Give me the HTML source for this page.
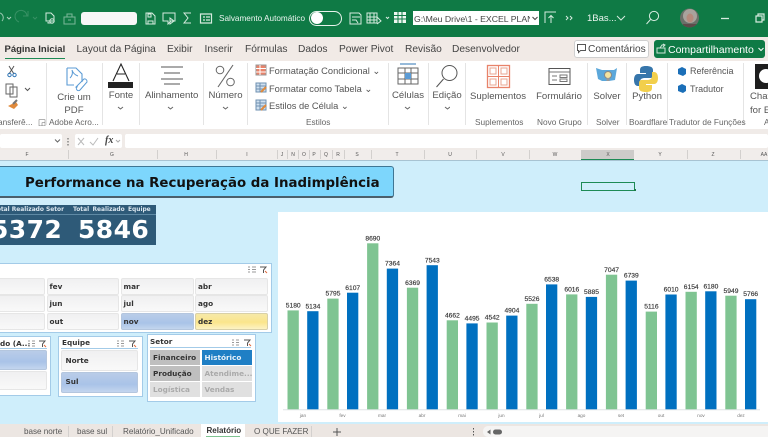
<!DOCTYPE html>
<html lang="pt"><head><meta charset="utf-8"><title>Excel</title>
<style>
html,body{margin:0;padding:0;background:#cfeefb}
#r{position:relative;width:768px;height:437px;overflow:hidden;font-family:"Liberation Sans",sans-serif;filter:blur(.3px);background:#cfeefb}
#r div,#r svg{position:absolute}
.t{white-space:nowrap;line-height:12px;color:#444}
.w{color:#fff}
.m{font-size:10.2px;top:44px;color:#444}
.rb{font-size:9.6px;color:#555;text-align:center}
.g{font-size:8.3px;color:#666;top:116px}
.sep{top:63px;height:62px;width:1px;background:#e4e4e4}
.c{top:152px;font-size:5px;color:#555;line-height:7px;text-align:center}
.cs{top:150px;width:1px;height:9px;background:#d3d0ce}
.b{font-family:"DejaVu Sans",sans-serif;font-weight:bold;font-size:7.3px;color:#333;line-height:16px;box-sizing:border-box;padding-left:2px;border:1px solid #e6e6e6;border-radius:2px;background:linear-gradient(#f0f0f1,#f9f9f9);white-space:nowrap;overflow:hidden}
.bl{background:linear-gradient(#b9cce8,#a9c3e8 60%,#c3d5ee);border-color:#b4c6de}
.s{font-family:"DejaVu Sans",sans-serif;font-weight:bold;font-size:7.3px;line-height:15px;padding-left:3px;box-sizing:border-box;white-space:nowrap;overflow:hidden}
.h{font-family:"DejaVu Sans",sans-serif;font-weight:bold;font-size:7.3px;color:#333;line-height:10px;white-space:nowrap}
.sl{background:#fff;border:1px solid #a3cbe8;box-sizing:border-box}
.tab{top:426px;font-size:8.100px;color:#555}
svg text{font-family:"Liberation Sans",sans-serif}
</style></head><body>
<div id="r">
<!-- title bar -->
<div style="left:0;top:0;width:768px;height:37px;background:#0f7a45"></div>
<svg style="left:0;top:0" width="768" height="37" fill="none" stroke="#d6ebdf" stroke-width="1">
<path d="M0 13a5 5 0 0 1 2 8" opacity=".7"/>
<path d="M7 17l2 2 2-2" opacity=".8"/>
<path d="M19 22a6 6 0 1 1 8 -6M28 11v5h-5" opacity=".2"/>
<path d="M33 17l2 2 2-2" opacity=".2"/>
<path d="M46 13h5l3 3v5h-8zM48 22v1h5" /><circle cx="52" cy="21" r="2.2"/>
<path d="M64 17h11v7h-11zM67 17v-3h5v3M68 20h3" opacity=".55"/>
<path d="M146 13h6l3 3v8h-9zM148 21h5v3h-5zM148 14h3v3h-3z"/>
<path d="M163 13h12v8h-4l-3 3v-3h-5zM170 18l4 3-4 3z"/>
<path d="M191 13h-7l4 5-4 5h7" />
<path d="M200.500 14h11v9h-11zM203 17h2M203 20h2M206 17h4M206 20h4" stroke-width="1.2"/>
<path d="M350 13h9l2 2v9h-11zM352 17h8M352 20h4l2 3" />
<path d="M367 13h10v10h-10zM370 13v10M374 13v10M367 17h10M367 20h10M377 17l4 4-4 3"/>
<path d="M386 17l1.500 1.500 1.500-1.500"/>
<path d="M545 23v-11h10M547 12h9M551 23v-7M548.500 18l2.500-2.500 2.500 2.500"/>
<path d="M566 16l2 2-2 2M570 16l2 2-2 2"/>
<path d="M617 16l4 4 4-4"/>
<circle cx="654" cy="16" r="4.600"/><path d="M650.500 19.500l-4 4.500"/>
<path d="M721 18.500h8" stroke-width="1.3"/>
<path d="M756 16h6v6h-6zM758 16v-2h6v6h-2" stroke-width="1.2"/>
</svg>
<div style="left:81px;top:11.500px;width:56px;height:13.500px;background:#f7f7f7;border-radius:3px"></div>
<div class="t w" style="left:219px;top:13px;font-size:8.200px;opacity:.92">Salvamento Automático</div>
<div style="left:309px;top:10.500px;width:33px;height:15px;box-sizing:border-box;border:1px solid #e8f2ec;border-radius:8px"></div>
<div style="left:311px;top:12px;width:12px;height:12px;background:#fff;border-radius:50%"></div>
<svg style="left:394px;top:12px" width="13" height="13"><rect x="0" y="0" width="12" height="11" fill="#eef6f1"/><path d="M0 3.500h12M0 7h12M4 0v11M8 0v11" stroke="#0f7a45"/></svg>
<div style="left:412.500px;top:11px;width:126px;height:14px;background:#fff"></div>
<div class="t" style="left:414px;top:13px;font-size:8.700px;color:#444;width:116px;overflow:hidden">G:\Meu Drive\1 - EXCEL PLANILH</div>
<svg style="left:532px;top:16px" width="6" height="5"><path d="M.5 1l2.500 2.500L5.500 1" fill="none" stroke="#444"/></svg>
<div class="t w" style="left:587px;top:13px;font-size:9.500px;opacity:.92">1Bas...</div>
<svg style="left:680px;top:8px" width="20" height="20"><defs><clipPath id="av"><circle cx="9.500" cy="10" r="9.500"/></clipPath></defs><g clip-path="url(#av)"><rect width="20" height="20" fill="#6b7069"/><circle cx="10" cy="8" r="7" fill="#a8a29c"/><ellipse cx="10" cy="10" rx="3.500" ry="4.500" fill="#b58a7c"/><rect x="3" y="16" width="14" height="4" fill="#5e4a4a"/></g></svg>

<!-- tabs -->
<div style="left:0;top:37px;width:768px;height:24px;background:#f1eae6"></div>
<div class="t m" style="left:4.500px;font-weight:bold;font-size:9.500px;color:#333">Página Inicial</div>
<div style="left:5px;top:57.500px;width:60px;height:1.500px;background:#1d8a55"></div>
<div class="t m" style="left:76.500px">Layout da Página</div>
<div class="t m" style="left:167px">Exibir</div>
<div class="t m" style="left:204.500px">Inserir</div>
<div class="t m" style="left:245px">Fórmulas</div>
<div class="t m" style="left:298px">Dados</div>
<div class="t m" style="left:339px">Power Pivot</div>
<div class="t m" style="left:405px">Revisão</div>
<div class="t m" style="left:452px">Desenvolvedor</div>
<div style="left:574px;top:39.500px;width:75px;height:18px;box-sizing:border-box;background:#fff;border:1px solid #cfcfcf;border-radius:3px"></div>
<svg style="left:577px;top:44px" width="10" height="10"><path d="M.5.500h8v6h-5l-2 2v-2h-1z" fill="none" stroke="#555"/></svg>
<div class="t" style="left:588px;top:43.500px;font-size:10.200px;color:#444">Comentários</div>
<div style="left:654px;top:39.500px;width:111px;height:18px;background:#0f7a45;border-radius:3px"></div>
<svg style="left:656px;top:43px" width="11" height="11"><path d="M1 5h8v5h-8zM4 5l2-3h3M7 1l2 1-2 2" fill="none" stroke="#cfe6d9"/></svg>
<div class="t w" style="left:668px;top:43.500px;font-size:10.500px">Compartilhamento</div>
<svg style="left:758px;top:47px" width="6" height="5"><path d="M.5 1l2.500 2.500L5.500 1" fill="none" stroke="#fff"/></svg>

<!-- ribbon -->
<div style="left:0;top:61px;width:768px;height:68px;background:#fff"></div>
<div class="sep" style="left:46px"></div><div class="sep" style="left:102px"></div><div class="sep" style="left:139px"></div><div class="sep" style="left:203px"></div><div class="sep" style="left:247px"></div><div class="sep" style="left:388px"></div><div class="sep" style="left:428px"></div><div class="sep" style="left:465px"></div><div class="sep" style="left:587px"></div><div class="sep" style="left:626px"></div><div class="sep" style="left:667px"></div><div class="sep" style="left:743px"></div>
<svg style="left:0;top:60px" width="768" height="70" fill="none">
<path d="M9 6l5 8M14 6l-5 8" stroke="#555"/><circle cx="9.500" cy="15" r="1.700" stroke="#2e75b6"/><circle cx="14.500" cy="15" r="1.700" stroke="#2e75b6"/>
<path d="M6 24h7v10h-7zM10 27h7v10h-7z" stroke="#666" fill="#fff"/>
<path d="M25 28l2.500 2.500L30 28" stroke="#555"/>
<path d="M8 46l6 3 4-4-2-3z" fill="#e08a3c"/><path d="M13 44l4-4" stroke="#777" stroke-width="2"/>
<path d="M67 8h9l6 6v8M67 8v17h7" stroke="#5b9bd5" stroke-width="1.100"/><path d="M70 18c2-2 3-5 2-8 1 3 3 5 6 6" stroke="#5b9bd5"/><path d="M76 27l8-8a2.500 2.500 0 0 1 3 3l-7 8a2 2 0 0 1-3-3z" stroke="#5b9bd5"/>
<path d="M113 21l8-17 8 17M117 14h8" stroke="#222" stroke-width="1.100"/>
<rect x="108" y="22" width="25" height="6" fill="#222"/>
<path d="M161 7h22M164 13h16M161 19h22M164 24h16" stroke="#777" stroke-width="1.200"/>
<circle cx="220" cy="10" r="3.800" stroke="#666"/><circle cx="230.500" cy="22" r="3.800" stroke="#666"/><path d="M233 5l-15 22" stroke="#666" stroke-width="1.100"/>
<rect x="256" y="5" width="10" height="10" fill="#e8836a" stroke="#999"/><path d="M256 8.500h10M256 12h10M260 5v10" stroke="#fff"/>
<rect x="256" y="23" width="10" height="9" fill="#cfe0ef" stroke="#6f90b0"/><path d="M256 26h10M256 29h10M260 23v9" stroke="#6f90b0"/><path d="M261 32l5-5" stroke="#e08a3c" stroke-width="2"/>
<rect x="256" y="40" width="10" height="10" fill="#cfe0ef" stroke="#6f90b0"/><path d="M256 43h10M256 46h10M260 40v10" stroke="#6f90b0"/><path d="M261 50l5-5" stroke="#e08a3c" stroke-width="2"/>
<path d="M398 8h20v16h-20zM398 13h20M398 19h20M405 8v16M411 8v16" stroke="#666"/><rect x="405" y="13" width="6" height="6" fill="#5b9bd5"/><path d="M400 4h16" stroke="#2e75b6"/>
<circle cx="449.500" cy="13" r="7.500" stroke="#555"/><path d="M443.500 19l-7 8" stroke="#555"/>
<rect x="487.500" y="5.500" width="22" height="22" stroke="#e8836a" stroke-width="1.300"/><path d="M498.500 5.500v22M487.500 16.500h22" stroke="#e8836a"/><rect x="490" y="8" width="6" height="6" stroke="#e8a590"/><rect x="501" y="8" width="6" height="6" stroke="#e8a590"/><rect x="490" y="19" width="6" height="6" stroke="#e8a590"/><rect x="501" y="19" width="6" height="6" stroke="#e8a590"/>
<rect x="549" y="8.500" width="21" height="16" stroke="#555"/><path d="M549 12h21M552 16h5M552 20h5" stroke="#777"/><rect x="560" y="15" width="7" height="2.500" stroke="#777"/><rect x="560" y="19" width="7" height="2.500" stroke="#777"/>
<path d="M596 8l6 2h12l3-2-2 12-6 1h-7l-4-2z" fill="#5ba7da"/><circle cx="608" cy="15" r="3.500" fill="#f3e3a0" stroke="#888"/><rect x="606.500" y="18" width="3" height="3" fill="#999"/>
<path d="M646 6c-4 0-6 1-6 4v3h6v1h-8c-3 0-4 3-4 6s1 6 4 6h2v-4c0-3 2-4 5-4h5c2 0 3-1 3-3v-5c0-3-3-4-7-4z" fill="#3776ab"/><path d="M646 32c4 0 6-1 6-4v-3h-6v-1h8c3 0 4-3 4-6s-1-6-4-6h-2v4c0 3-2 4-5 4h-5c-2 0-3 1-3 3v5c0 3 3 4 7 4z" fill="#f2cf4c"/>
<path d="M678 9l4-2 4 2v5l-3 2-5-2z" fill="#1b6fb8"/><path d="M678 26l4-2 4 2v5l-3 2-5-2z" fill="#1b6fb8"/>
</svg>
<div style="left:755px;top:64px;width:13px;height:25px;background:#1e1e1e"></div>
<div style="left:759px;top:69px;width:14px;height:14px;background:#fff;border-radius:50%"></div>
<div class="t rb" style="left:54px;top:90.500px;width:40px;line-height:13.500px;white-space:normal">Crie um PDF</div>
<div class="t g" style="left:49px">Adobe Acro...</div>
<div class="t g" style="left:-2px">ansferê...</div>
<div class="t g" style="left:38px;color:#666">◲</div>
<div class="t rb" style="left:100px;top:90px;width:42px">Fonte</div>
<div class="t rb" style="left:145px;top:90px;width:53px">Alinhamento</div>
<div class="t rb" style="left:205px;top:90px;width:41px">Número</div>
<div class="t" style="left:269px;top:65px;font-size:9.300px;color:#555">Formatação Condicional ⌄</div>
<div class="t" style="left:269px;top:83px;font-size:9.300px;color:#555">Formatar como Tabela ⌄</div>
<div class="t" style="left:269px;top:100px;font-size:9.300px;color:#555">Estilos de Célula ⌄</div>
<div class="t g" style="left:306px">Estilos</div>
<div class="t rb" style="left:390px;top:90px;width:36px">Células</div>
<div class="t rb" style="left:431px;top:90px;width:32px">Edição</div>
<div class="t rb" style="left:470px;top:91px;width:56px">Suplementos</div>
<div class="t rb" style="left:532px;top:91px;width:54px">Formulário</div>
<div class="t rb" style="left:590px;top:91px;width:34px">Solver</div>
<div class="t rb" style="left:629px;top:91px;width:36px">Python</div>
<div class="t" style="left:690px;top:65px;font-size:9px;color:#555">Referência</div>
<div class="t" style="left:690px;top:83px;font-size:9px;color:#555">Tradutor</div>
<div class="t rb" style="left:750px;top:90px;width:30px;text-align:left;line-height:13.500px;white-space:normal">Chat for E</div>
<div class="t g" style="left:475px">Suplementos</div>
<div class="t g" style="left:537px">Novo Grupo</div>
<div class="t g" style="left:596px">Solver</div>
<div class="t g" style="left:629px">Boardflare</div>
<div class="t g" style="left:669px">Tradutor de Funções</div>
<div class="t g" style="left:764px">A</div>
<svg style="left:0;top:100px" width="450" height="12" fill="none" stroke="#666"><path d="M118 7l2.500 2 2.500-2M168 7l2.500 2 2.500-2M223 7l2.500 2 2.500-2M405 7l2.500 2 2.500-2M445 7l2.500 2 2.500-2"/></svg>

<!-- formula bar -->
<div style="left:0;top:129px;width:768px;height:21px;background:#f0ebe8"></div>
<div style="left:0;top:134px;width:62px;height:14px;background:#fff;border-radius:2px"></div>
<div style="left:74.500px;top:134px;width:47px;height:14px;background:#fff;border-radius:2px"></div>
<div style="left:125px;top:134px;width:643px;height:14px;background:#fff;border-radius:2px"></div>
<svg style="left:0;top:134px" width="125" height="14" fill="none"><path d="M55 5.500l2.500 2.500 2.500-2.500" stroke="#666"/><path d="M68 4v1.500M68 7v1.500M68 10v1.500" stroke="#555"/><path d="M78 4l6 7M84 4l-6 7M90 8l3 3 5-7" stroke="#bbb"/><path d="M116 6l2 2 2-2" stroke="#aaa"/></svg>
<div class="t" style="left:105px;top:135px;font:italic bold 10px 'Liberation Serif',serif;line-height:12px;color:#444">fx</div>

<!-- column headers -->
<div style="left:0;top:150px;width:768px;height:9.500px;background:#f1edeb;border-bottom:1px solid #a8c3d2;box-sizing:content-box"></div>
<div style="left:581px;top:150px;width:53px;height:9px;background:#cdcbc9;border-bottom:1px solid #1d8a55"></div>
<div class="t c" style="left:17px;width:20px">F</div><div class="t c" style="left:102px;width:20px">G</div><div class="t c" style="left:176px;width:20px">H</div><div class="t c" style="left:237px;width:20px">I</div><div class="t c" style="left:277px;width:10px">J</div><div class="t c" style="left:288px;width:10px">N</div><div class="t c" style="left:299px;width:10px">O</div><div class="t c" style="left:309px;width:10px">P</div><div class="t c" style="left:321px;width:10px">Q</div><div class="t c" style="left:333px;width:10px">R</div><div class="t c" style="left:347px;width:20px">S</div><div class="t c" style="left:387px;width:20px">T</div><div class="t c" style="left:440px;width:20px">U</div><div class="t c" style="left:493px;width:20px">V</div><div class="t c" style="left:545px;width:20px">W</div><div class="t c" style="left:598px;width:20px">X</div><div class="t c" style="left:650px;width:20px">Y</div><div class="t c" style="left:703px;width:20px">Z</div><div class="t c" style="left:754px;width:20px">AA</div>
<div class="cs" style="left:68px"></div><div class="cs" style="left:157px"></div><div class="cs" style="left:216px"></div><div class="cs" style="left:277px"></div><div class="cs" style="left:287px"></div><div class="cs" style="left:298px"></div><div class="cs" style="left:309px"></div><div class="cs" style="left:320px"></div><div class="cs" style="left:332px"></div><div class="cs" style="left:344px"></div><div class="cs" style="left:371px"></div><div class="cs" style="left:424px"></div><div class="cs" style="left:476px"></div><div class="cs" style="left:529px"></div><div class="cs" style="left:687px"></div><div class="cs" style="left:740px"></div>

<!-- selected cell -->
<div style="left:581px;top:181.500px;width:54px;height:9.500px;box-sizing:border-box;border:1px solid #1d8a55"></div>
<div style="left:633.500px;top:188.500px;width:2.500px;height:2.500px;background:#1d7a45"></div>

<!-- title banner -->
<div style="left:-6px;top:165.500px;width:400px;height:32.500px;box-sizing:border-box;background:#7dd6fc;border:1.500px solid #3f7694;border-bottom:2px solid #4a5f6c;border-radius:3px"></div>
<div class="t" style="left:25px;top:176px;font:bold 13.350px 'DejaVu Sans',sans-serif;line-height:16px;color:#111">Performance na Recuperação da Inadimplência</div>

<!-- KPI -->
<div style="left:0;top:205px;width:156px;height:39.500px;background:#2e5a78"></div>
<div style="left:0;top:213.500px;width:156px;height:1px;background:#5f8aa5"></div>
<div class="t" style="right:704px;top:205.500px;font:bold 5.900px 'DejaVu Sans',sans-serif;line-height:9px;color:#dbe6ee">Total Realizado Setor</div>
<div class="t" style="left:73px;top:205.500px;font:bold 5.900px 'DejaVu Sans',sans-serif;line-height:9px;color:#dbe6ee;word-spacing:1.300px">Total Realizado Equipe</div>
<div class="t" style="left:-9px;top:215px;font:bold 25px 'DejaVu Sans',sans-serif;line-height:29px;color:#fff;letter-spacing:.4px">5372</div>
<div class="t" style="left:78px;top:215px;font:bold 25px 'DejaVu Sans',sans-serif;line-height:29px;color:#fff;letter-spacing:.4px">5846</div>

<!-- month slicer -->
<div class="sl" style="left:-4px;top:263px;width:276px;height:70px"></div>
<div class="b" style="left:-4px;top:277.500px;width:49px;height:17px"></div>
<div class="b" style="left:46.500px;top:277.500px;width:72.500px;height:17px">fev</div>
<div class="b" style="left:120.500px;top:277.500px;width:73px;height:17px">mar</div>
<div class="b" style="left:195px;top:277.500px;width:73px;height:17px">abr</div>
<div class="b" style="left:-4px;top:295px;width:49px;height:17px"></div>
<div class="b" style="left:46.500px;top:295px;width:72.500px;height:17px">jun</div>
<div class="b" style="left:120.500px;top:295px;width:73px;height:17px">jul</div>
<div class="b" style="left:195px;top:295px;width:73px;height:17px">ago</div>
<div class="b" style="left:-4px;top:312.500px;width:49px;height:17px"></div>
<div class="b" style="left:46.500px;top:312.500px;width:72.500px;height:17px">out</div>
<div class="b bl" style="left:120.500px;top:312.500px;width:73px;height:17px">nov</div>
<div class="b" style="left:195px;top:312.500px;width:73px;height:17px;background:linear-gradient(#f6e9a8,#fbe58c 55%,#fdf3c4);border-color:#d8d0a8">dez</div>

<!-- slicer 2 -->
<div class="sl" style="left:-4px;top:335.500px;width:55px;height:60.500px"></div>
<div class="h" style="left:0;top:339px">do (A...</div>
<div style="left:0;top:348px;width:47px;height:1px;background:#a3cbe8"></div>
<div class="b bl" style="left:-4px;top:350px;width:51px;height:19.500px"></div>
<div class="b" style="left:-4px;top:371px;width:51px;height:19px"></div>

<!-- Equipe -->
<div class="sl" style="left:58px;top:335.500px;width:84.500px;height:61.500px"></div>
<div class="h" style="left:62px;top:337.500px">Equipe</div>
<div style="left:61px;top:348px;width:77px;height:1px;background:#a3cbe8"></div>
<div class="b" style="left:61px;top:350px;width:77px;height:21px;line-height:19px;padding-left:3.500px">Norte</div>
<div class="b bl" style="left:61px;top:372px;width:77px;height:20.500px;line-height:18px;padding-left:3.500px">Sul</div>

<!-- Setor -->
<div class="sl" style="left:146.500px;top:334px;width:109px;height:68px"></div>
<div class="h" style="left:150px;top:336.500px">Setor</div>
<div style="left:150px;top:347px;width:101px;height:1px;background:#a3cbe8"></div>
<div class="s" style="left:150px;top:349.500px;width:50px;height:15px;background:#bfbfbf;color:#333">Financeiro</div>
<div class="s" style="left:201.500px;top:349.500px;width:50px;height:15px;background:#1f7fc5;color:#e8f2fa">Histórico</div>
<div class="s" style="left:150px;top:366px;width:50px;height:15px;background:#bfbfbf;color:#333">Produção</div>
<div class="s" style="left:201.500px;top:366px;width:50px;height:15px;background:#e0e0e0;color:#aaa">Atendime...</div>
<div class="s" style="left:150px;top:382px;width:50px;height:14.500px;background:#e0e0e0;color:#aaa">Logística</div>
<div class="s" style="left:201.500px;top:382px;width:50px;height:14.500px;background:#e0e0e0;color:#aaa">Vendas</div>

<svg style="left:0;top:260px" width="280" height="100" fill="none">
<g stroke="#999"><path d="M248 7h2M248 9.500h2M248 12h2M252 7h4M252 9.500h4M252 12h4"/><path d="M117 81h2M117 83.500h2M117 86h2M121 81h3M121 83.500h3M121 86h3"/><path d="M28 81h2M28 83.500h2M28 86h2M32 81h3M32 83.500h3M32 86h3"/><path d="M232 80h2M232 82.500h2M232 85h2M236 80h3M236 82.500h3M236 85h3"/></g>
<g stroke="#555"><path d="M260 7h6l-2.500 3v3M129 81h6l-2.500 3v3M39 81h6l-2.500 3v3M244 80h6l-2.500 3v3"/></g>
<g stroke="#e06a3c"><path d="M265 11l2 2M134 85l2 2M44 85l2 2M249 84l2 2"/></g>
</svg>

<!-- chart -->
<div style="left:278px;top:212px;width:490px;height:210px;background:#fff"></div>
<svg style="left:0;top:0" width="768" height="437">
<path d="M283 409.800H760" stroke="#dfe3e6" stroke-width="1"/>
<g fill="#7fc492">
<rect x="287.500" y="310.400" width="11.300" height="98.900"/><rect x="327.300" y="298.600" width="11.300" height="110.700"/><rect x="367.100" y="243.300" width="11.300" height="166"/><rect x="406.900" y="287.700" width="11.300" height="121.600"/><rect x="446.700" y="320.300" width="11.300" height="89"/><rect x="486.500" y="322.500" width="11.300" height="86.800"/><rect x="526.300" y="303.800" width="11.300" height="105.500"/><rect x="566.100" y="294.400" width="11.300" height="114.900"/><rect x="605.900" y="274.700" width="11.300" height="134.600"/><rect x="645.700" y="311.600" width="11.300" height="97.700"/><rect x="685.500" y="291.800" width="11.300" height="117.500"/><rect x="725.300" y="295.700" width="11.300" height="113.600"/>
</g>
<g fill="#0070c0">
<rect x="307.200" y="311.200" width="11.300" height="98.100"/><rect x="347" y="292.700" width="11.300" height="116.600"/><rect x="386.800" y="268.600" width="11.300" height="140.700"/><rect x="426.600" y="265.200" width="11.300" height="144.100"/><rect x="466.400" y="323.400" width="11.300" height="85.900"/><rect x="506.200" y="315.600" width="11.300" height="93.700"/><rect x="546" y="284.400" width="11.300" height="124.900"/><rect x="585.800" y="296.900" width="11.300" height="112.400"/><rect x="625.600" y="280.600" width="11.300" height="128.700"/><rect x="665.400" y="294.500" width="11.300" height="114.800"/><rect x="705.200" y="291.300" width="11.300" height="118"/><rect x="745" y="299.200" width="11.300" height="110.100"/>
</g>
<g font-size="6.700" fill="#333" text-anchor="middle" stroke="#333" stroke-width=".15">
<text x="293.200" y="307.500">5180</text><text x="312.900" y="308.300">5134</text><text x="333" y="295.700">5795</text><text x="352.700" y="289.800">6107</text><text x="372.800" y="240.400">8690</text><text x="392.500" y="265.700">7364</text><text x="412.600" y="284.800">6369</text><text x="432.300" y="262.300">7543</text><text x="452.400" y="317.400">4662</text><text x="472.100" y="320.500">4495</text><text x="492.200" y="319.600">4542</text><text x="511.900" y="312.700">4904</text><text x="532" y="300.900">5526</text><text x="551.700" y="281.500">6538</text><text x="571.800" y="291.500">6016</text><text x="591.500" y="294">5885</text><text x="611.600" y="271.800">7047</text><text x="631.300" y="277.700">6739</text><text x="651.400" y="308.700">5116</text><text x="671.100" y="291.600">6010</text><text x="691.200" y="288.900">6154</text><text x="710.900" y="288.400">6180</text><text x="731" y="292.800">5949</text><text x="750.700" y="296.200">5766</text>
</g>
<g font-size="4.700" fill="#777" text-anchor="middle">
<text x="303" y="417">jan</text><text x="342.500" y="417">fev</text><text x="382" y="417">mar</text><text x="422" y="417">abr</text><text x="462" y="417">mai</text><text x="501.500" y="417">jun</text><text x="541.500" y="417">jul</text><text x="581.500" y="417">ago</text><text x="621" y="417">set</text><text x="661" y="417">out</text><text x="701" y="417">nov</text><text x="741" y="417">dez</text>
</g>
</svg>

<!-- bottom tabs -->
<div style="left:0;top:424px;width:768px;height:13px;background:#ece6e2"></div>
<div style="left:483px;top:426px;width:285px;height:11px;background:#f5f4f3;border-radius:5px 0 0 5px"></div>
<div class="t tab" style="left:24px">base norte</div>
<div class="t tab" style="left:77px">base sul</div>
<div class="t tab" style="left:123px">Relatório_Unificado</div>
<div style="left:201px;top:424px;width:44px;height:13px;background:#fff"></div>
<div class="t tab" style="left:206.500px;top:425px;font-weight:bold;color:#333;font-size:8px">Relatório</div>
<div style="left:206px;top:436px;width:34px;height:1px;background:#7fc492"></div>
<div class="t tab" style="left:254px">O QUE FAZER</div>
<div class="cs" style="left:68px;top:426px;height:11px"></div>
<div class="cs" style="left:112px;top:426px;height:11px"></div>
<div class="cs" style="left:311px;top:426px;height:11px"></div>
<svg style="left:330px;top:426px" width="180" height="11"><path d="M7 2v8M3 6h8" stroke="#555"/><path d="M143.500 2v1.500M143.500 5v1.500M143.500 8v1.500" stroke="#555"/><path d="M157 6l3.500-2.500v5z" fill="#666"/><rect x="163" y="3.500" width="9" height="5" rx="2.500" fill="#666"/></svg>
</div>
</body></html>
